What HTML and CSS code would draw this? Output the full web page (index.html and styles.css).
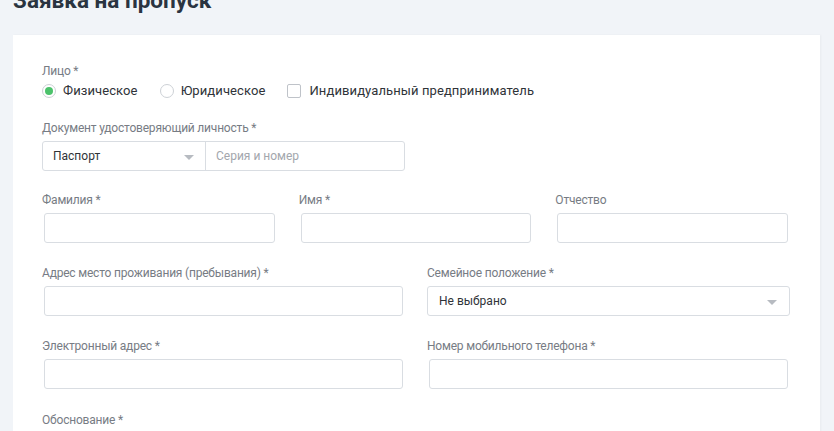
FILE: index.html
```html
<!DOCTYPE html>
<html lang="ru">
<head>
<meta charset="utf-8">
<title>Заявка на пропуск</title>
<link rel="stylesheet" href="styles.css">
</head>
<body>
<div class="page">
  <h1 class="title">Заявка на пропуск</h1>
  <div class="card">
    <div class="group">
      <div class="label">Лицо *</div>
      <div class="choices">
        <label class="choice"><span class="radio checked"></span>Физическое</label>
        <label class="choice"><span class="radio"></span>Юридическое</label>
        <label class="choice"><span class="checkbox"></span>Индивидуальный предприниматель</label>
      </div>
    </div>

    <div class="row two first">
      <div class="col">
        <div class="label">Документ удостоверяющий личность *</div>
        <div class="combo">
          <div class="combo-select"><span class="value">Паспорт</span><span class="caret"></span></div>
          <div class="combo-input placeholder">Серия и номер</div>
        </div>
      </div>
    </div>

    <div class="row three">
      <div class="col">
        <div class="label">Фамилия *</div>
        <div class="input"></div>
      </div>
      <div class="col">
        <div class="label">Имя *</div>
        <div class="input"></div>
      </div>
      <div class="col">
        <div class="label">Отчество</div>
        <div class="input"></div>
      </div>
    </div>

    <div class="row two">
      <div class="col">
        <div class="label">Адрес место проживания (пребывания) *</div>
        <div class="input"></div>
      </div>
      <div class="col">
        <div class="label">Семейное положение *</div>
        <div class="select"><span class="value">Не выбрано</span><span class="caret"></span></div>
      </div>
    </div>

    <div class="row two">
      <div class="col">
        <div class="label">Электронный адрес *</div>
        <div class="input"></div>
      </div>
      <div class="col">
        <div class="label">Номер мобильного телефона *</div>
        <div class="input"></div>
      </div>
    </div>

    <div class="row two last">
      <div class="col">
        <div class="label">Обоснование *</div>
        <div class="input"></div>
      </div>
    </div>
  </div>
</div>
</body>
</html>
```
FILE: styles.css
```css
* { box-sizing: border-box; }
html, body {
  margin: 0;
  padding: 0;
  background: #f1f4f8;
  font-family: Roboto, "Noto Sans", Arial, sans-serif;
  overflow: hidden;
}
.page {
  padding: 0 14px 0 13px;
}
.title {
  margin: -14px 0 21px 0;
  font-size: 22.5px;
  line-height: 28px;
  font-weight: 700;
  color: #2a3441;
}
.card {
  width: 807px;
  background: #fff;
  padding: 27px 8px 40px 29px;
  box-shadow: 1px 0 2px rgba(0, 0, 0, 0.04);
}
.label {
  font-size: 12px;
  line-height: 16px;
  letter-spacing: -0.2px;
  color: #777c84;
  padding-top: 1px;
  margin-bottom: 5px;
}
.group .label { margin-bottom: 4px; }
.choices {
  display: flex;
  align-items: center;
  gap: 22px;
  height: 16px;
}
.choice {
  display: flex;
  align-items: center;
  font-size: 13px;
  line-height: 16px;
  letter-spacing: 0.1px;
  color: #2f3338;
}
.radio {
  width: 14px;
  height: 14px;
  border: 1px solid #cdd1d6;
  border-radius: 50%;
  margin-right: 7px;
  display: flex;
  align-items: center;
  justify-content: center;
}
.radio.checked::after {
  content: "";
  width: 8px;
  height: 8px;
  border-radius: 50%;
  background: #4cc26b;
}
.checkbox {
  width: 14px;
  height: 14px;
  border: 1px solid #bfc3c9;
  border-radius: 2px;
  margin-right: 8px;
}
.row {
  display: grid;
  margin-top: 21px;
}
.row.first { margin-top: 20px; }
.row.three { margin-top: 20px; }
.row.last { margin-top: 22px; }
.row.two { grid-template-columns: 1fr 1fr; }
.row.three { grid-template-columns: 1fr 1fr 1fr; }
.col { padding-right: 22px; min-width: 0; }
.input {
  height: 30px;
  margin: 0 2px;
  border: 1px solid #d9dde2;
  border-radius: 3px;
  background: #fff;
}
.select {
  height: 30px;
  border: 1px solid #d9dde2;
  border-radius: 3px;
  display: flex;
  align-items: center;
  justify-content: space-between;
  padding: 0 12px 0 11px;
}
.value {
  font-size: 12px;
  color: #2f3338;
}
.caret {
  width: 0;
  height: 0;
  border-left: 5px solid transparent;
  border-right: 5px solid transparent;
  border-top: 5px solid #b7bbc1;
  margin-top: 2px;
}
.combo {
  display: flex;
  height: 30px;
  border: 1px solid #d9dde2;
  border-radius: 3px;
}
.combo-select {
  width: 163px;
  flex: none;
  display: flex;
  align-items: center;
  justify-content: space-between;
  padding: 0 11px 0 10px;
  border-right: 1px solid #d9dde2;
}
.combo-input {
  flex: 1;
  display: flex;
  align-items: center;
  padding-left: 10px;
  font-size: 12px;
}
.placeholder { color: #a3a7ad; }
```
